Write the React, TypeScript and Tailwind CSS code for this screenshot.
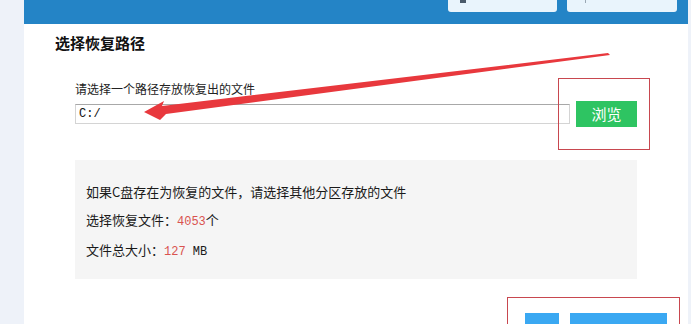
import React from "react";

const cjk = { fontFamily: '"Noto Sans CJK SC", "Noto Sans", sans-serif' };
const mono = { fontFamily: '"Liberation Mono", "DejaVu Sans Mono", monospace' };

export default function App() {
  return (
    <div className="relative w-[691px] h-[324px] overflow-hidden flex bg-white" style={cjk}>
      <div className="w-[24px] shrink-0 h-full bg-[#eef2f9]" />
      <div className="flex-1 flex flex-col min-h-0">
        <div className="shrink-0 h-[24px] bg-[#2484c6] flex justify-end gap-[10px] pr-[11px]">
          <div className="w-[109px] h-[12px] bg-[#e9f4fc] rounded-b-[3px] relative">
            <span className="absolute left-[12px] top-0 w-[6px] h-[3px] bg-[#4a5a6a]" />
          </div>
          <div className="w-[110px] h-[12px] bg-[#e9f4fc] rounded-b-[3px] relative">
            <span className="absolute left-[18px] top-0 w-[1px] h-[3px] bg-[#9aa8b4]" />
          </div>
        </div>
        <div className="shrink-0 pl-[31px] pt-[9px] text-[15px] leading-[20px] font-bold text-[#111]">选择恢复路径</div>
        <div className="shrink-0 pl-[51px] mt-[28px] text-[12px] leading-[16px] text-[#222]">请选择一个路径存放恢复出的文件</div>
        <div className="shrink-0 pl-[51px] mt-[4px] flex items-center gap-[6px] h-[26px]">
          <div className="w-[495px] h-[20px] border border-[#d4d4d4] border-t-[#a8a8a8] flex items-center pl-[3px] text-[12px] text-[#111]" style={mono}>
            C:/
          </div>
          <div className="w-[61px] h-[26px] bg-[#2ec462] text-white text-[15px] flex items-center justify-center">浏览</div>
        </div>
        <div className="shrink-0 ml-[51px] mt-[33px] w-[562px] h-[119px] bg-[#f5f5f5] pl-[11px] pt-[18px] text-[13px] leading-[28px] text-[#1a1a1a]">
          <div>如果C盘存在为恢复的文件，请选择其他分区存放的文件</div>
          <div>
            选择恢复文件：<span className="text-[#d9534f] text-[12px]" style={mono}>4053</span>个
          </div>
          <div>
            文件总大小：<span className="text-[#d9534f] text-[12px]" style={mono}>127</span>
            <span className="text-[12px]" style={mono}> MB</span>
          </div>
        </div>
        <div className="shrink-0 mt-[34px] flex gap-[11px] pl-[501px]">
          <div className="w-[34px] h-[20px] bg-[#3aa8f2]" />
          <div className="w-[97px] h-[20px] bg-[#3aa8f2]" />
        </div>
      </div>
      <div className="w-[3px] shrink-0 h-full bg-[#eef2f9]" />

      <div className="absolute left-[558px] top-[78px] w-[92px] h-[72px] border border-[#c8474f]" />
      <div className="absolute left-[507px] top-[297px] w-[173px] h-[40px] border border-[#c8474f]" />
      <svg className="absolute left-0 top-0" width="691" height="324" viewBox="0 0 691 324">
        <polygon
          points="144,112 164,101 162,106 608,53 610,55 166,114 160,120"
          fill="#e8383d"
        />
      </svg>
    </div>
  );
}
